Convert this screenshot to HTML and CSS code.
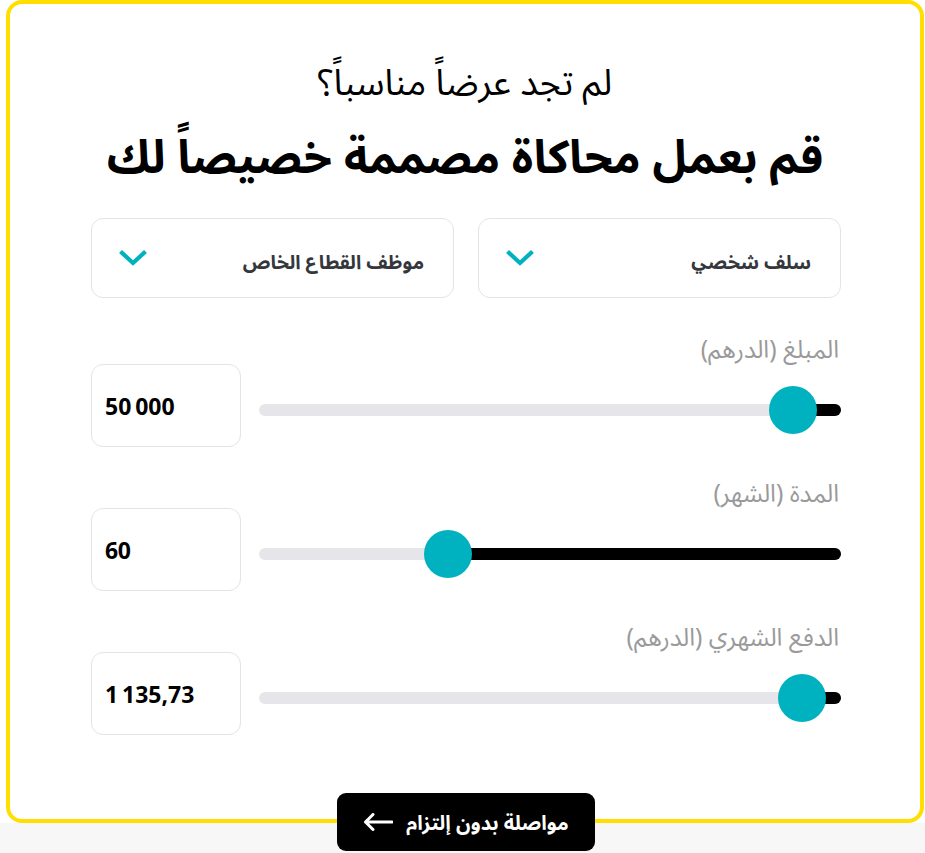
FILE: index.html
```html
<!DOCTYPE html>
<html lang="ar" dir="rtl">
<head>
<meta charset="utf-8">
<title>محاكاة</title>
<link rel="stylesheet" href="styles.css">
</head>
<body>
<div class="page">
  <section class="card">
    <p class="lead">لم تجد عرضاً مناسباً؟</p>
    <h1 class="title">قم بعمل محاكاة مصممة خصيصاً لك</h1>
    <div class="content">
      <div class="selects">
        <div class="select">
          <span class="select-text">سلف شخصي</span>
          <svg class="chev" width="30" height="17" viewBox="0 0 30 17"><polyline points="2.5,2.5 15,14 27.5,2.5" fill="none" stroke="#00b2bf" stroke-width="4.2" stroke-linecap="butt" stroke-linejoin="miter"/></svg>
        </div>
        <div class="select">
          <span class="select-text">موظف القطاع الخاص</span>
          <svg class="chev" width="30" height="17" viewBox="0 0 30 17"><polyline points="2.5,2.5 15,14 27.5,2.5" fill="none" stroke="#00b2bf" stroke-width="4.2" stroke-linecap="butt" stroke-linejoin="miter"/></svg>
        </div>
      </div>

      <div class="group group-first">
        <div class="label">المبلغ (الدرهم)</div>
        <div class="row">
          <div class="slider">
            <div class="track">
              <div class="fill" style="width: 8.25%"></div>
              <div class="thumb" style="left: calc(91.75% - 24px)"></div>
            </div>
          </div>
          <div class="value" dir="ltr">50&#8239;000</div>
        </div>
      </div>

      <div class="group">
        <div class="label">المدة (الشهر)</div>
        <div class="row">
          <div class="slider">
            <div class="track">
              <div class="fill" style="width: 67.5%"></div>
              <div class="thumb" style="left: calc(32.5% - 24px)"></div>
            </div>
          </div>
          <div class="value" dir="ltr">60</div>
        </div>
      </div>

      <div class="group">
        <div class="label">الدفع الشهري (الدرهم)</div>
        <div class="row">
          <div class="slider">
            <div class="track">
              <div class="fill" style="width: 6.7%"></div>
              <div class="thumb" style="left: calc(93.3% - 24px)"></div>
            </div>
          </div>
          <div class="value" dir="ltr">1&#8239;135,73</div>
        </div>
      </div>
    </div>

    <button class="cta" type="button">
      <span>مواصلة بدون إلتزام</span>
      <svg width="30" height="18" viewBox="0 0 30 18"><path d="M29 9H2.5M10 1.5L2.5 9L10 16.5" fill="none" stroke="#fff" stroke-width="3" stroke-linecap="round" stroke-linejoin="round"/></svg>
    </button>
  </section>
  <div class="below"></div>
</div>
</body>
</html>
```

FILE: styles.css
```css
* { box-sizing: border-box; }
html, body { margin: 0; padding: 0; }
body {
  background: #ffffff;
  font-family: "Noto Sans", "Noto Sans Arabic UI", sans-serif;
  color: #000;
}
.page {
  display: flex;
  flex-direction: column;
}
.card {
  position: relative;
  margin: 0 1px 0 6px;
  height: 823px;
  border: 4px solid #ffde00;
  border-radius: 16px;
  background: #fff;
  padding: 58px 0 0 0;
}
.lead {
  margin: 0;
  text-align: center;
  font-size: 36px;
  line-height: 40px;
  font-weight: 400;
}
.title {
  margin: 28px 0 0 0;
  text-align: center;
  font-size: 46px;
  line-height: 50px;
  font-weight: 700;
}
.content {
  padding: 0 79px 0 81px;
  margin-top: 38px;
}
.selects {
  display: grid;
  grid-template-columns: 1fr 1fr;
  gap: 24px;
}
.select {
  height: 80px;
  border: 1px solid #e4e4e4;
  border-radius: 12px;
  display: flex;
  align-items: center;
  justify-content: space-between;
  padding: 0 29px 0 26px;
}
.select-text {
  font-size: 19.5px;
  font-weight: 700;
  color: #35373d;
  margin-top: 7px;
}
.chev { margin-top: -1px; }
.group { margin-top: 32px; }
.group-first { margin-top: 37px; }
.label {
  font-size: 24.5px;
  line-height: 28px;
  color: #9a9a9a;
  padding-right: 2px;
}
.row {
  display: flex;
  align-items: center;
  gap: 18px;
  height: 83px;
  margin-top: 1px;
}
.slider {
  flex: 1;
  padding-top: 9px;
}
.track {
  position: relative;
  height: 12px;
  border-radius: 6px;
  background: #e5e5ea;
}
.fill {
  position: absolute;
  right: 0;
  top: 0;
  height: 12px;
  border-radius: 6px;
  background: #000;
}
.thumb {
  position: absolute;
  top: -18px;
  width: 48px;
  height: 48px;
  border-radius: 50%;
  background: #00b2bf;
}
.value {
  width: 150px;
  height: 83px;
  flex: none;
  border: 1px solid #e4e4e4;
  border-radius: 12px;
  display: flex;
  align-items: center;
  padding-left: 13px;
  font-size: 23px;
  font-weight: 700;
  letter-spacing: -0.4px;
  text-align: left;
}
.cta {
  position: absolute;
  left: 50%;
  transform: translateX(-50%);
  margin-left: 1px;
  bottom: -32px;
  width: 258px;
  height: 58px;
  border: 0;
  border-radius: 9px;
  background: #000;
  color: #fff;
  display: flex;
  align-items: center;
  justify-content: center;
  gap: 13px;
  font-family: "Noto Sans", "Noto Sans Arabic UI", sans-serif;
  font-size: 20px;
  font-weight: 700;
  padding: 0;
}
.below {
  height: 30px;
  background: #f7f7f7;
}
```
